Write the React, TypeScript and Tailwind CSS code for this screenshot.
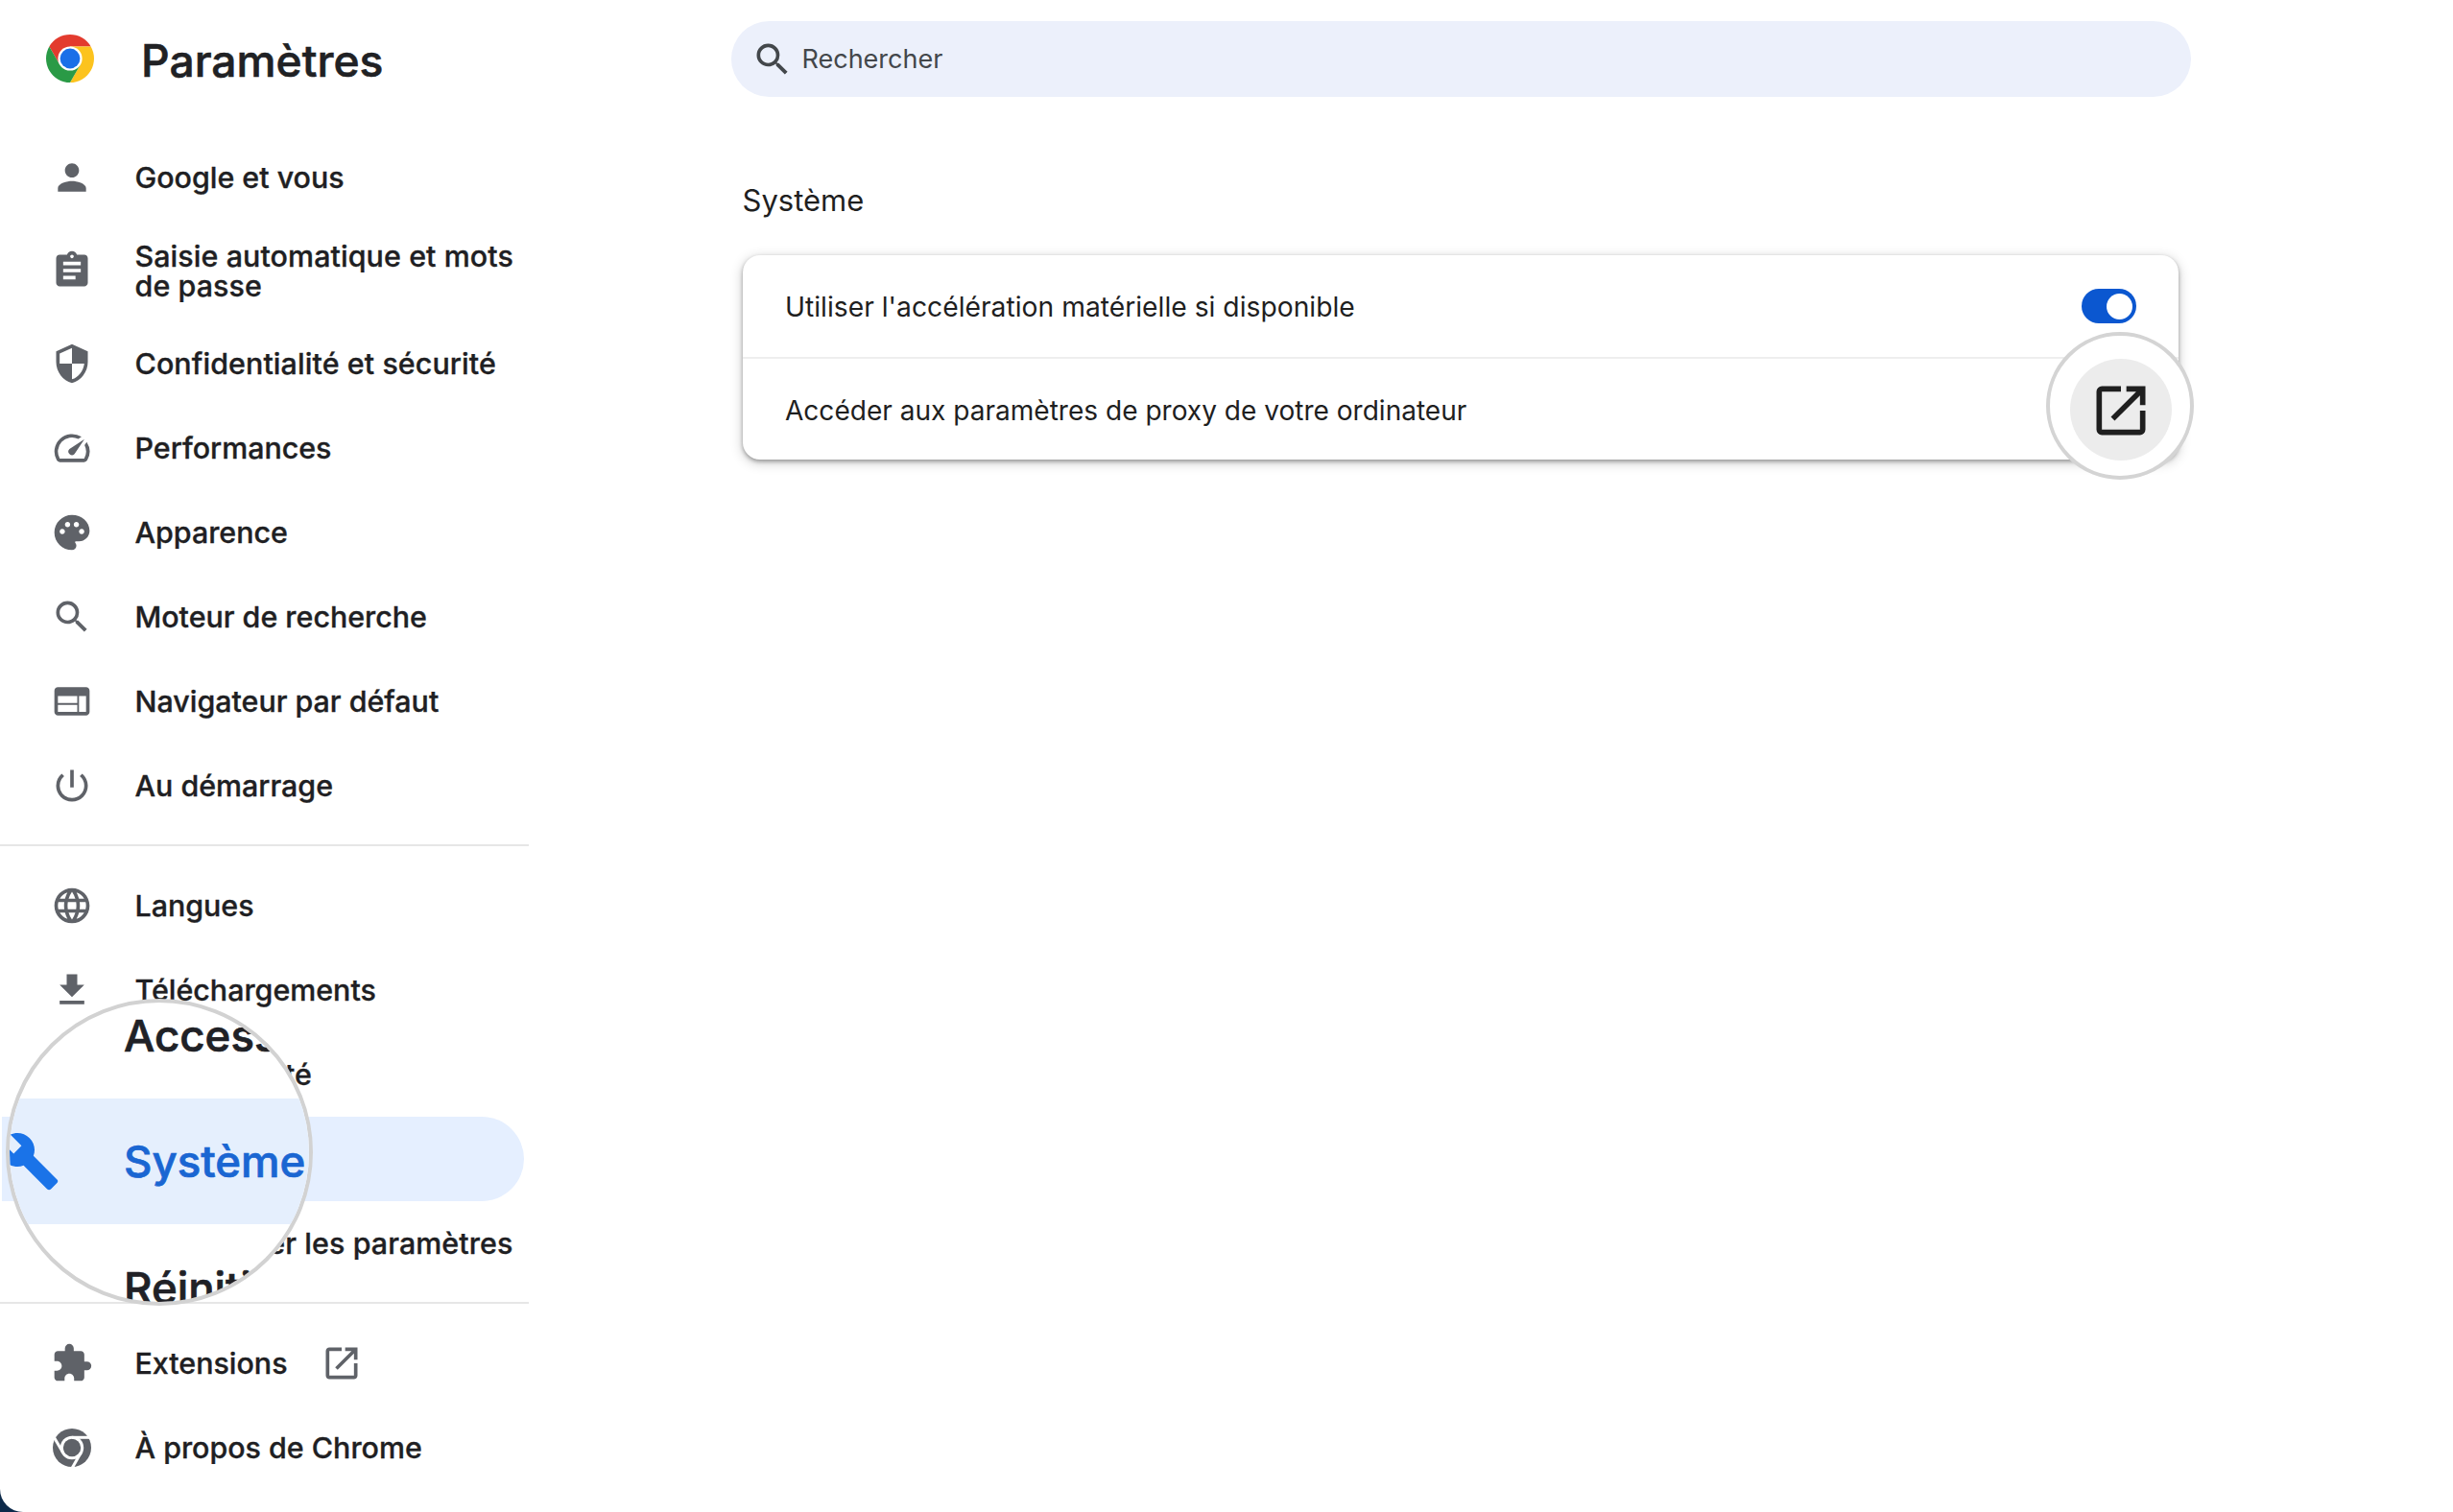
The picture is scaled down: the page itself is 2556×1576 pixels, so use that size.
import type { ReactNode } from 'react'
import {
  MdAccessibilityNew,
  MdAssignment,
  MdBuild,
  MdExtension,
  MdFileDownload,
  MdLanguage,
  MdPalette,
  MdPerson,
  MdPowerSettingsNew,
  MdRestore,
  MdSearch,
  MdSecurity,
  MdSpeed,
  MdWeb,
} from 'react-icons/md'

const ChromeLogo = () => (
  <svg viewBox="-25 -25 50 50" className="w-[50px] h-[50px] shrink-0">
    <path d="M-21.65-12.5A25 25 0 0 1 21.65-12.5H0L-10.83 6.25Z" fill="#e33b2e" />
    <path d="M0-12.5H21.65A25 25 0 0 1 0 25L10.83 6.25Z" fill="#fcc31e" />
    <path d="M0 25A25 25 0 0 1-21.65-12.5L-10.83 6.25H10.83Z" fill="#2a9a46" />
    <circle r="12.6" fill="#fff" />
    <circle r="10.4" fill="#1a6fe8" />
  </svg>
)

const ChromeOutline = () => (
  <svg viewBox="-22 -22 44 44" className="w-11 h-11">
    <circle r="20" fill="currentColor" />
    <circle r="12.2" fill="#fff" />
    <circle r="9.2" fill="currentColor" />
    <g stroke="#fff" strokeWidth="3">
      <path d="M0-10.7H21" />
      <path d="M0-10.7H21" transform="rotate(120)" />
      <path d="M0-10.7H21" transform="rotate(240)" />
    </g>
  </svg>
)

const OpenInNew = ({ className }: { className: string }) => (
  <svg viewBox="0 -960 960 960" fill="currentColor" className={className}>
    <path d="M200-120q-33 0-56.5-23.5T120-200v-560q0-33 23.5-56.5T200-840h280v80H200v560h560v-280h80v280q0 33-23.5 56.5T760-120H200Zm188-212-56-56 372-372H560v-80h280v280h-80v-144L388-332Z" />
  </svg>
)

interface NavItemProps {
  icon: ReactNode
  label: string
  active?: boolean
  tall?: boolean
  external?: boolean
}

const NavItem = ({ icon, label, active, tall, external }: NavItemProps) => (
  <a
    className={`flex items-center w-[544px] ml-[2px] pl-[51px] rounded-r-full ${tall ? 'h-[106px]' : 'h-[88px]'} ${
      active ? 'bg-[#e5efff] text-[#1967d2]' : 'text-[#1f1f23]'
    }`}
  >
    <span className={`text-[44px] shrink-0 ${active ? 'text-[#1a73e8]' : 'text-[#5f6268]'}`}>{icon}</span>
    <span
      className={`ml-[43.5px] pt-px text-[30.4px] leading-[31px] font-medium [-webkit-text-stroke:0.35px] whitespace-pre-line ${
        label.length > 25 ? 'tracking-[0.1px]' : ''
      }`}
    >
      {label}
    </span>
    {external && <OpenInNew className="w-11 h-11 ml-[34px] text-[#5f6268]" />}
  </a>
)

const Divider = () => <div className="h-[2px] w-[551px] mt-[17px] mb-[18px] bg-[#e6e6e6]" />

const Sidebar = () => (
  <aside className="w-[550px] shrink-0">
    <header className="flex items-center h-[122px] mb-[19px] pl-[47.5px]">
      <ChromeLogo />
      <h1 className="ml-[49.5px] pt-[4px] text-[46.2px] leading-none font-medium [-webkit-text-stroke:0.6px] text-[#202124]">
        Paramètres
      </h1>
    </header>
    <nav>
      <NavItem icon={<MdPerson />} label="Google et vous" />
      <NavItem icon={<MdAssignment />} label={'Saisie automatique et mots\nde passe'} tall />
      <NavItem icon={<MdSecurity />} label="Confidentialité et sécurité" />
      <NavItem icon={<MdSpeed />} label="Performances" />
      <NavItem icon={<MdPalette />} label="Apparence" />
      <NavItem icon={<MdSearch />} label="Moteur de recherche" />
      <NavItem icon={<MdWeb />} label="Navigateur par défaut" />
      <NavItem icon={<MdPowerSettingsNew />} label="Au démarrage" />
      <Divider />
      <NavItem icon={<MdLanguage />} label="Langues" />
      <NavItem icon={<MdFileDownload />} label="Téléchargements" />
      <NavItem icon={<MdAccessibilityNew />} label="Accessibilité" />
      <NavItem icon={<MdBuild />} label="Système" active />
      <NavItem icon={<MdRestore />} label="Réinitialiser les paramètres" />
      <Divider />
      <NavItem icon={<MdExtension />} label="Extensions" external />
      <NavItem icon={<ChromeOutline />} label="À propos de Chrome" />
    </nav>
  </aside>
)

// Round magnifier over the selected menu entry
const MenuLens = () => (
  <div className="absolute left-[5.5px] top-[1041px] w-[320px] h-[320px] rounded-full border-4 border-[#d2d2d2] bg-white overflow-hidden">
    <div className="-mt-[32px] text-[45.6px] leading-none font-medium [-webkit-text-stroke:0.7px] text-[#202126] whitespace-nowrap">
      <div className="flex items-center h-[131.5px] pt-[2px] pl-[119.5px]">Accessibilité</div>
      <div className="flex items-center h-[131.5px] bg-[#e5effd] text-[#1a66d2]">
        <MdBuild className="w-[65px] h-[65px] -ml-[12px] shrink-0 text-[#1a73e8]" />
        <span className="ml-[66.5px] pt-[2px]">Système</span>
      </div>
      <div className="flex items-center h-[131.5px] pt-[2px] pl-[119.5px]">Réinitialiser</div>
    </div>
  </div>
)

// Same thing over the proxy link button
const LinkLens = () => (
  <div className="absolute left-[2132px] top-[346px] w-[154px] h-[154px] rounded-full border-4 border-[#d4d4d4] bg-white flex items-center justify-center">
    <div className="w-[106px] h-[106px] mt-[7px] ml-[2px] shrink-0 rounded-full bg-[#ececec] flex items-center justify-center">
      <OpenInNew className="w-[68px] h-[68px] mt-[2px] shrink-0 text-[#1f1f1f]" />
    </div>
  </div>
)

const App = () => {
  return (
    <div className="relative w-[2556px] h-[1576px] overflow-hidden bg-[#0d2a4a] font-['Inter',sans-serif]">
      <div className="flex h-full bg-white rounded-bl-[24px]">
        <Sidebar />

        <main className="pl-[211.5px] pt-[22px]">
          <div className="flex items-center w-[1521px] h-[79px] pl-[21px] rounded-full bg-[#ecf0fb] text-[#43474b]">
            <MdSearch className="w-11 h-11" />
            <span className="ml-[9px] pt-[2px] text-[27px]">Rechercher</span>
          </div>

          <section className="ml-[12px] w-[1496px]">
            <h2 className="mt-[88px] h-10 text-[31px] leading-10 text-[#1f1f1f]">Système</h2>
            <div className="mt-[37px] rounded-[18px] bg-white text-[#1f1f1f] shadow-[0_2px_4px_rgba(0,0,0,0.34),0_3px_12px_2px_rgba(0,0,0,0.15)]">
              <div className="flex items-center justify-between h-[106px] pl-[44.5px] pr-[44px]">
                <span className="pt-[2px] text-[28.25px]">Utiliser l'accélération matérielle si disponible</span>
                <span className="flex items-center justify-end w-[57px] h-9 pr-1 rounded-full bg-[#0b57d0]">
                  <span className="w-[27px] h-[27px] rounded-full bg-white" />
                </span>
              </div>
              <div className="flex items-center h-[107px] pl-[44.5px] border-t-2 border-[#eeeeee]">
                <span className="pt-[3px] text-[28.05px]">Accéder aux paramètres de proxy de votre ordinateur</span>
              </div>
            </div>
          </section>
        </main>
      </div>

      <MenuLens />
      <LinkLens />
    </div>
  )
}

export default App
